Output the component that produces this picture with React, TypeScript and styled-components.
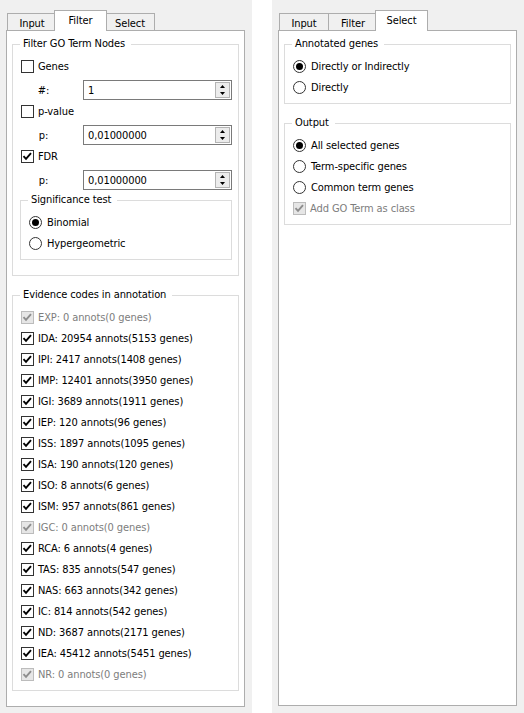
import React from 'react';
import styled, { createGlobalStyle, css } from 'styled-components';

const GlobalStyle = createGlobalStyle`
  html, body { margin: 0; padding: 0; background: #fff; }
  body {
    font-family: "DejaVu Sans Condensed", "Liberation Sans", sans-serif;
    font-size: 11px;
    letter-spacing: -0.1px;
    color: #000;
  }
`;

const Screen = styled.div`
  display: flex;
  gap: 20px;
  width: 524px;
  height: 713px;
`;

const Panel = styled.div`
  width: 252px;
  height: 713px;
  box-sizing: border-box;
  background: #f0f0f0;
  padding: 10px 7px 7px 6px;
  display: flex;
  flex-direction: column;
`;

const TabBar = styled.div`
  display: flex;
  align-items: flex-end;
  height: 21px;
  padding-left: 1px;
  margin-bottom: -1px;
  position: relative;
  z-index: 1;
`;

const Tab = styled.div<{ $active?: boolean }>`
  box-sizing: border-box;
  width: 50px;
  height: 17px;
  margin: 0 0 1px -1px;
  border: 1px solid #adadad;
  border-bottom: none;
  background: #f0f0f0;
  display: flex;
  align-items: center;
  justify-content: center;
  padding-top: 2px;
  &:first-child { margin-left: 0; }
  ${(p) =>
    p.$active &&
    css`
      position: relative;
      z-index: 2;
      width: 53px;
      height: 21px;
      margin: 0 -1px 0 -3px;
      background: #fff;
      padding: 0 0 1px;
      &:first-child { margin-left: -2px; }
    `}
`;

const Pane = styled.div`
  flex: 1;
  box-sizing: border-box;
  background: #fff;
  border: 1px solid #adadad;
  padding: 6px 5px 15px;
  display: flex;
  flex-direction: column;
  gap: 12px;
`;

const Group = styled.fieldset<{ $padBottom?: number }>`
  margin: 0;
  min-width: 0;
  border: 1px solid #dcdcdc;
  padding: 7px 6px ${(p) => p.$padBottom ?? 7}px 7px;
`;

const Legend = styled.legend`
  padding: 0 6px 0 3px;
  height: 14px;
  line-height: 14px;
`;

const Stack = styled.div`
  display: flex;
  flex-direction: column;
  gap: 4px;
`;

const FilterStack = styled.div`
  display: flex;
  flex-direction: column;
`;

const Row = styled.label<{ $disabled?: boolean }>`
  display: flex;
  align-items: center;
  gap: 4px;
  height: 17px;
  white-space: nowrap;
  color: ${(p) => (p.$disabled ? '#7d7d7d' : '#000')};
`;

const RadioRow = styled(Row)`
  gap: 5px;
`;

const Box = styled.span<{ $disabled?: boolean }>`
  box-sizing: border-box;
  width: 13px;
  height: 13px;
  margin-left: 1px;
  flex: none;
  border: 1px solid ${(p) => (p.$disabled ? '#bcbcbc' : '#333')};
  background: ${(p) => (p.$disabled ? '#e6e6e6' : '#fff')};
  display: flex;
  align-items: center;
  justify-content: center;
`;

const Circle = styled.span<{ $checked?: boolean }>`
  box-sizing: border-box;
  width: 13px;
  height: 13px;
  margin-left: 1px;
  flex: none;
  border: 1px solid #333;
  border-radius: 50%;
  background: #fff;
  display: flex;
  align-items: center;
  justify-content: center;
  &::after {
    content: '';
    width: 7px;
    height: 7px;
    border-radius: 50%;
    background: ${(p) => (p.$checked ? '#000' : 'transparent')};
  }
`;

const SpinRow = styled.div`
  display: grid;
  grid-template-columns: 47px 1fr;
  column-gap: 16px;
  align-items: center;
  height: 20px;
  margin: 5px 0 3px;
`;

const SpinLabel = styled.span`
  text-align: center;
`;

const SpinBox = styled.div`
  box-sizing: border-box;
  height: 20px;
  border: 1px solid #7a7a7a;
  background: #fff;
  display: flex;
  align-items: center;
  padding: 1px 1px 1px 4px;
`;

const SpinText = styled.span`
  flex: 1;
`;

const SpinButtons = styled.div`
  box-sizing: border-box;
  width: 15px;
  height: 16px;
  border: 1px solid #b4b4b4;
  background: #ececec;
  display: flex;
  flex-direction: column;
`;

const SpinHalf = styled.div`
  flex: 1;
  display: flex;
  align-items: center;
  justify-content: center;
`;

const Check = ({ disabled }: { disabled?: boolean }) => (
  <svg width="11" height="11" viewBox="0 0 11 11">
    <polyline
      points="1.5,5.2 4,7.8 9,2.2"
      fill="none"
      stroke={disabled ? '#8d8d8d' : '#000'}
      strokeWidth="1.9"
    />
  </svg>
);

const Arrow = ({ up }: { up?: boolean }) => (
  <svg width="5" height="3" viewBox="0 0 5 3">
    <polygon points={up ? '0,3 5,3 2.5,0' : '0,0 5,0 2.5,3'} fill="#000" />
  </svg>
);

const CheckItem = ({
  label,
  checked,
  disabled,
}: {
  label: string;
  checked?: boolean;
  disabled?: boolean;
}) => (
  <Row $disabled={disabled}>
    <Box $disabled={disabled}>{checked && <Check disabled={disabled} />}</Box>
    {label}
  </Row>
);

const RadioItem = ({ label, checked }: { label: string; checked?: boolean }) => (
  <RadioRow>
    <Circle $checked={checked} />
    {label}
  </RadioRow>
);

const Spin = ({ label, value }: { label: string; value: string }) => (
  <SpinRow>
    <SpinLabel>{label}</SpinLabel>
    <SpinBox>
      <SpinText>{value}</SpinText>
      <SpinButtons>
        <SpinHalf>
          <Arrow up />
        </SpinHalf>
        <SpinHalf>
          <Arrow />
        </SpinHalf>
      </SpinButtons>
    </SpinBox>
  </SpinRow>
);

const Tabs = ({ active }: { active: string }) => (
  <TabBar>
    {['Input', 'Filter', 'Select'].map((t) => (
      <Tab key={t} $active={t === active}>
        {t}
      </Tab>
    ))}
  </TabBar>
);

const evidence: [string, boolean][] = [
  ['EXP: 0 annots(0 genes)', true],
  ['IDA: 20954 annots(5153 genes)', false],
  ['IPI: 2417 annots(1408 genes)', false],
  ['IMP: 12401 annots(3950 genes)', false],
  ['IGI: 3689 annots(1911 genes)', false],
  ['IEP: 120 annots(96 genes)', false],
  ['ISS: 1897 annots(1095 genes)', false],
  ['ISA: 190 annots(120 genes)', false],
  ['ISO: 8 annots(6 genes)', false],
  ['ISM: 957 annots(861 genes)', false],
  ['IGC: 0 annots(0 genes)', true],
  ['RCA: 6 annots(4 genes)', false],
  ['TAS: 835 annots(547 genes)', false],
  ['NAS: 663 annots(342 genes)', false],
  ['IC: 814 annots(542 genes)', false],
  ['ND: 3687 annots(2171 genes)', false],
  ['IEA: 45412 annots(5451 genes)', false],
  ['NR: 0 annots(0 genes)', true],
];

export default function App() {
  return (
    <>
      <GlobalStyle />
      <Screen>
        <Panel>
          <Tabs active="Filter" />
          <Pane>
            <Group $padBottom={15}>
              <Legend>Filter GO Term Nodes</Legend>
              <FilterStack>
                <CheckItem label="Genes" />
                <Spin label="#:" value="1" />
                <CheckItem label="p-value" />
                <Spin label="p:" value="0,01000000" />
                <CheckItem label="FDR" checked />
                <Spin label="p:" value="0,01000000" />
                <Group>
                  <Legend>Significance test</Legend>
                  <Stack>
                    <RadioItem label="Binomial" checked />
                    <RadioItem label="Hypergeometric" />
                  </Stack>
                </Group>
              </FilterStack>
            </Group>
            <Group>
              <Legend>Evidence codes in annotation</Legend>
              <Stack>
                {evidence.map(([label, disabled]) => (
                  <CheckItem key={label} label={label} checked disabled={disabled} />
                ))}
              </Stack>
            </Group>
          </Pane>
        </Panel>
        <Panel>
          <Tabs active="Select" />
          <Pane>
            <Group>
              <Legend>Annotated genes</Legend>
              <Stack>
                <RadioItem label="Directly or Indirectly" checked />
                <RadioItem label="Directly" />
              </Stack>
            </Group>
            <Group>
              <Legend>Output</Legend>
              <Stack>
                <RadioItem label="All selected genes" checked />
                <RadioItem label="Term-specific genes" />
                <RadioItem label="Common term genes" />
                <CheckItem label="Add GO Term as class" checked disabled />
              </Stack>
            </Group>
          </Pane>
        </Panel>
      </Screen>
    </>
  );
}
